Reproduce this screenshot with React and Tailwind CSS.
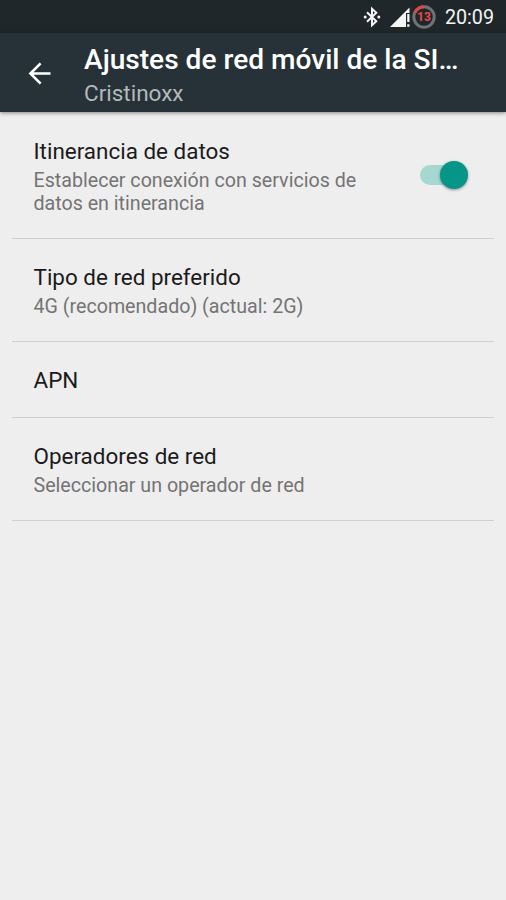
const settings = [
    {
        title: 'Itinerancia de datos',
        summary: 'Establecer conexión con servicios de datos en itinerancia',
        size: 'h-[127px]',
        toggle: true
    },
    {
        title: 'Tipo de red preferido',
        summary: '4G (recomendado) (actual: 2G)',
        size: 'h-[103px]'
    },
    { title: 'APN', size: 'h-[76px]' },
    {
        title: 'Operadores de red',
        summary: 'Seleccionar un operador de red',
        size: 'h-[103px]'
    }
]

function StatusBar() {
    return (
        <div className="flex h-[33px] items-center justify-end bg-[#1f272a] pr-3 text-[#f4f5f5]">
            <svg className="h-[22px] w-5" viewBox="0 0 20 22" fill="none" stroke="currentColor" strokeWidth="2">
                <path d="M5 6.2 14.3 15.3 10 19.3V2.7l4.3 4L5 15.8" />
                <circle cx="3.2" cy="11" r="1.5" fill="currentColor" stroke="none" />
                <circle cx="16.8" cy="11" r="1.5" fill="currentColor" stroke="none" />
            </svg>
            <svg className="ml-[8px] h-[20px] w-[21px]" viewBox="0 0 21 20" fill="currentColor">
                <path d="M0 20 19.5 .5V6H16v14Z" />
                <path d="M17.2 7h2.3v8h-2.3zM17.2 17.2h2.3v2.5h-2.3z" />
            </svg>
            <div className="relative ml-px flex h-6 w-6 items-center justify-center">
                <svg className="absolute inset-0 h-6 w-6" viewBox="0 0 24 24" fill="none" strokeWidth="3">
                    <circle cx="12" cy="12" r="10.2" stroke="#6c7478" />
                    <path d="M2.9 7.5A10.2 10.2 0 0 1 12 1.8" stroke="#e5443f" />
                </svg>
                <span className="relative text-[12px] leading-none font-bold text-[#f04a43]">13</span>
            </div>
            <span className="ml-[9px] pt-[2px] text-[19.7px] leading-none">20:09</span>
        </div>
    )
}

function Header() {
    return (
        <header className="relative flex h-[79px] items-center bg-[#263238] shadow-[0_1px_4px_rgba(0,0,0,0.45)]">
            <button type="button" className="ml-[27px] flex h-6 w-6 shrink-0 items-center justify-center pt-px text-white">
                <svg className="h-[23px] w-[23px]" viewBox="0 0 23 23" fill="none" stroke="currentColor" strokeWidth="2.6">
                    <path d="M22.5 11.5H2.5M12.6 1.4 2.4 11.5 12.6 21.6" />
                </svg>
            </button>
            <div className="ml-[33px] flex-1 pt-[7px]">
                <h1 className="text-[28.1px] leading-[33px] font-medium whitespace-nowrap text-white">
                    Ajustes de red móvil de la SI…
                </h1>
                <p className="mt-px text-[22.5px] leading-8 text-[#b4b9bb]">Cristinoxx</p>
            </div>
        </header>
    )
}

function Toggle() {
    return (
        <button type="button" role="switch" aria-checked="true" className="flex h-7 w-12 shrink-0 items-center">
            <span className="h-5 w-9 rounded-full bg-[#a4d8d0]" />
            <span className="-ml-4 h-7 w-7 shrink-0 rounded-full bg-[#069688] shadow-[0_1px_3px_rgba(0,0,0,0.4)]" />
        </button>
    )
}

function SettingRow({ title, summary, size, toggle }) {
    return (
        <li className={`flex items-center justify-between border-b border-[#d0d0d0] pr-[26.5px] pl-[22px] ${size}`}>
            <div className="max-w-[350px] pt-[2px]">
                <h2 className="text-[22.45px] leading-[27px] text-[#1b1b1b]">{title}</h2>
                {summary && (
                    <p className="mt-1 text-[19.65px] leading-[23px] text-[#747474]">{summary}</p>
                )}
            </div>
            {toggle && <Toggle />}
        </li>
    )
}

export default function App() {
    return (
        <div className="flex h-[900px] w-[506px] flex-col overflow-hidden bg-[#eeeeee] font-['Roboto',sans-serif]">
            <StatusBar />
            <Header />
            <ul className="mr-3 ml-[11.5px]">
                {settings.map((item) => (
                    <SettingRow key={item.title} {...item} />
                ))}
            </ul>
        </div>
    )
}
